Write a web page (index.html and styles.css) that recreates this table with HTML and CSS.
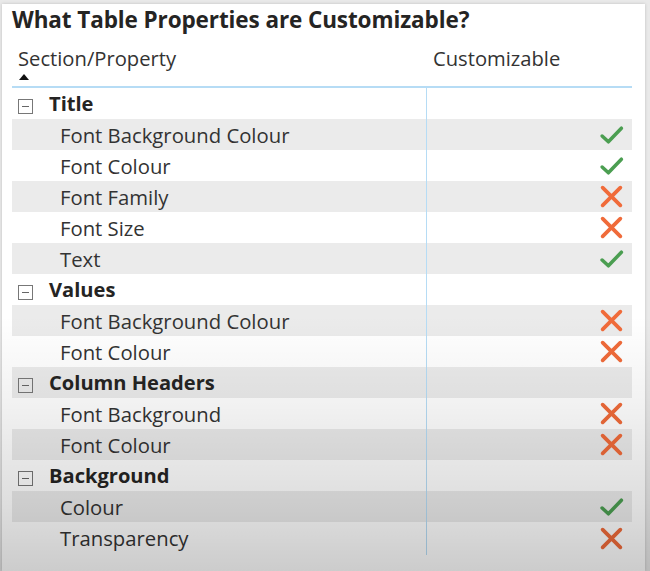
FILE: index.html
```html
<!DOCTYPE html>
<html>
<head>
<meta charset="utf-8">
<link rel="stylesheet" href="styles.css">
</head>
<body>
<div class="panel">
  <h1 class="title">What Table Properties are Customizable?</h1>
  <div class="table">
    <div class="head">
      <div class="hcell first">Section/Property<span class="sort"></span></div>
      <div class="hcell second">Customizable</div>
    </div>
    <div class="body">
      <div class="row section"><div class="c1"><span class="tog"></span>Title</div><div class="c2"></div></div>
      <div class="row alt"><div class="c1 child">Font Background Colour</div><div class="c2"><svg class="ic" viewBox="0 0 24 24"><path class="ok" d="M3 13.5 L9 19 L21.5 6"/></svg></div></div>
      <div class="row"><div class="c1 child">Font Colour</div><div class="c2"><svg class="ic" viewBox="0 0 24 24"><path class="ok" d="M3 13.5 L9 19 L21.5 6"/></svg></div></div>
      <div class="row alt"><div class="c1 child">Font Family</div><div class="c2"><svg class="ic" viewBox="0 0 24 24"><path class="no" d="M3.5 3.5 L20.5 20.5 M20.5 3.5 L3.5 20.5"/></svg></div></div>
      <div class="row"><div class="c1 child">Font Size</div><div class="c2"><svg class="ic" viewBox="0 0 24 24"><path class="no" d="M3.5 3.5 L20.5 20.5 M20.5 3.5 L3.5 20.5"/></svg></div></div>
      <div class="row alt"><div class="c1 child">Text</div><div class="c2"><svg class="ic" viewBox="0 0 24 24"><path class="ok" d="M3 13.5 L9 19 L21.5 6"/></svg></div></div>
      <div class="row section"><div class="c1"><span class="tog"></span>Values</div><div class="c2"></div></div>
      <div class="row alt"><div class="c1 child">Font Background Colour</div><div class="c2"><svg class="ic" viewBox="0 0 24 24"><path class="no" d="M3.5 3.5 L20.5 20.5 M20.5 3.5 L3.5 20.5"/></svg></div></div>
      <div class="row"><div class="c1 child">Font Colour</div><div class="c2"><svg class="ic" viewBox="0 0 24 24"><path class="no" d="M3.5 3.5 L20.5 20.5 M20.5 3.5 L3.5 20.5"/></svg></div></div>
      <div class="row alt section"><div class="c1"><span class="tog"></span>Column Headers</div><div class="c2"></div></div>
      <div class="row"><div class="c1 child">Font Background</div><div class="c2"><svg class="ic" viewBox="0 0 24 24"><path class="no" d="M3.5 3.5 L20.5 20.5 M20.5 3.5 L3.5 20.5"/></svg></div></div>
      <div class="row alt"><div class="c1 child">Font Colour</div><div class="c2"><svg class="ic" viewBox="0 0 24 24"><path class="no" d="M3.5 3.5 L20.5 20.5 M20.5 3.5 L3.5 20.5"/></svg></div></div>
      <div class="row section"><div class="c1"><span class="tog"></span>Background</div><div class="c2"></div></div>
      <div class="row alt"><div class="c1 child">Colour</div><div class="c2"><svg class="ic" viewBox="0 0 24 24"><path class="ok" d="M3 13.5 L9 19 L21.5 6"/></svg></div></div>
      <div class="row last"><div class="c1 child">Transparency</div><div class="c2"><svg class="ic" viewBox="0 0 24 24"><path class="no" d="M3.5 3.5 L20.5 20.5 M20.5 3.5 L3.5 20.5"/></svg></div></div>
    </div>
  </div>
  <div class="vignette"></div>
</div>
</body>
</html>
```

FILE: styles.css
```css
html, body {
  margin: 0;
  padding: 0;
  background: #e9e9e9;
}
body {
  width: 650px;
  height: 571px;
  overflow: hidden;
  font-family: "Open Sans", "Noto Sans", sans-serif;
  color: #333;
}
.panel {
  position: relative;
  margin: 4px 5px 0 2px;
  height: 567px;
  background: #fff;
  box-shadow: 0 0 3px rgba(0,0,0,0.18);
  padding: 0 13px 0 10px;
  box-sizing: border-box;
}
.title {
  margin: 0;
  padding: 1px 0 0 0;
  height: 36px;
  font-size: 22.5px;
  font-weight: 700;
  color: #252423;
  letter-spacing: -0.1px;
  line-height: 30px;
}
.head {
  display: grid;
  grid-template-columns: 415px 203px;
  height: 47px;
  border-bottom: 2px solid #b6dcf5;
  box-sizing: border-box;
}
.hcell {
  font-size: 20.2px;
  color: #333;
  line-height: 26px;
  padding-top: 4px;
}
.first {
  padding-left: 6px;
  position: relative;
}
.second {
  padding-left: 6px;
}
.sort {
  position: absolute;
  left: 7px;
  top: 33px;
  width: 0;
  height: 0;
  border-left: 5px solid transparent;
  border-right: 5px solid transparent;
  border-bottom: 6px solid #111;
}
.body {
  display: flex;
  flex-direction: column;
}
.row {
  display: grid;
  grid-template-columns: 415px 203px;
  height: 31px;
  align-items: center;
}
.row.alt {
  background: #ebebeb;
}
.row.last {
  height: 33px;
  align-items: start;
}
.row.last .c1 { padding-top: 2px; }
.row.last .c2 { padding-top: 4px; }
.c1 {
  height: 100%;
  display: flex;
  align-items: center;
  border-right: 1px solid #b6dcf5;
  box-sizing: border-box;
  font-size: 20.3px;
  white-space: nowrap;
}
.row.last .c1 { height: 33px; align-items: flex-start; }
.section .c1 {
  font-weight: 700;
  color: #252423;
  padding-left: 6px;
  font-size: 20.1px;
}
.child {
  padding-left: 48px;
}
.tog {
  display: inline-block;
  width: 13px;
  height: 13px;
  border: 1.5px solid #777;
  margin-right: 16px;
  margin-top: 5px;
  position: relative;
  box-sizing: content-box;
}
.tog::after {
  content: "";
  position: absolute;
  left: 3px;
  right: 3px;
  top: 6px;
  height: 1.5px;
  background: #666;
}
.c2 {
  display: flex;
  justify-content: flex-end;
  align-items: center;
  padding-right: 6px;
}
.ic {
  width: 25px;
  height: 25px;
}
.ok {
  fill: none;
  stroke: #4b9e51;
  stroke-width: 3.4;
  stroke-linecap: round;
  stroke-linejoin: round;
}
.no {
  fill: none;
  stroke: #f06b3a;
  stroke-width: 3.6;
  stroke-linecap: round;
}
.vignette {
  position: absolute;
  left: -2px;
  right: -5px;
  top: 0;
  bottom: 0;
  pointer-events: none;
  background: linear-gradient(to bottom, rgba(0,0,0,0) 0%, rgba(0,0,0,0) 55%, rgba(0,0,0,0.05) 70%, rgba(0,0,0,0.13) 88%, rgba(0,0,0,0.2) 100%);
}
```
